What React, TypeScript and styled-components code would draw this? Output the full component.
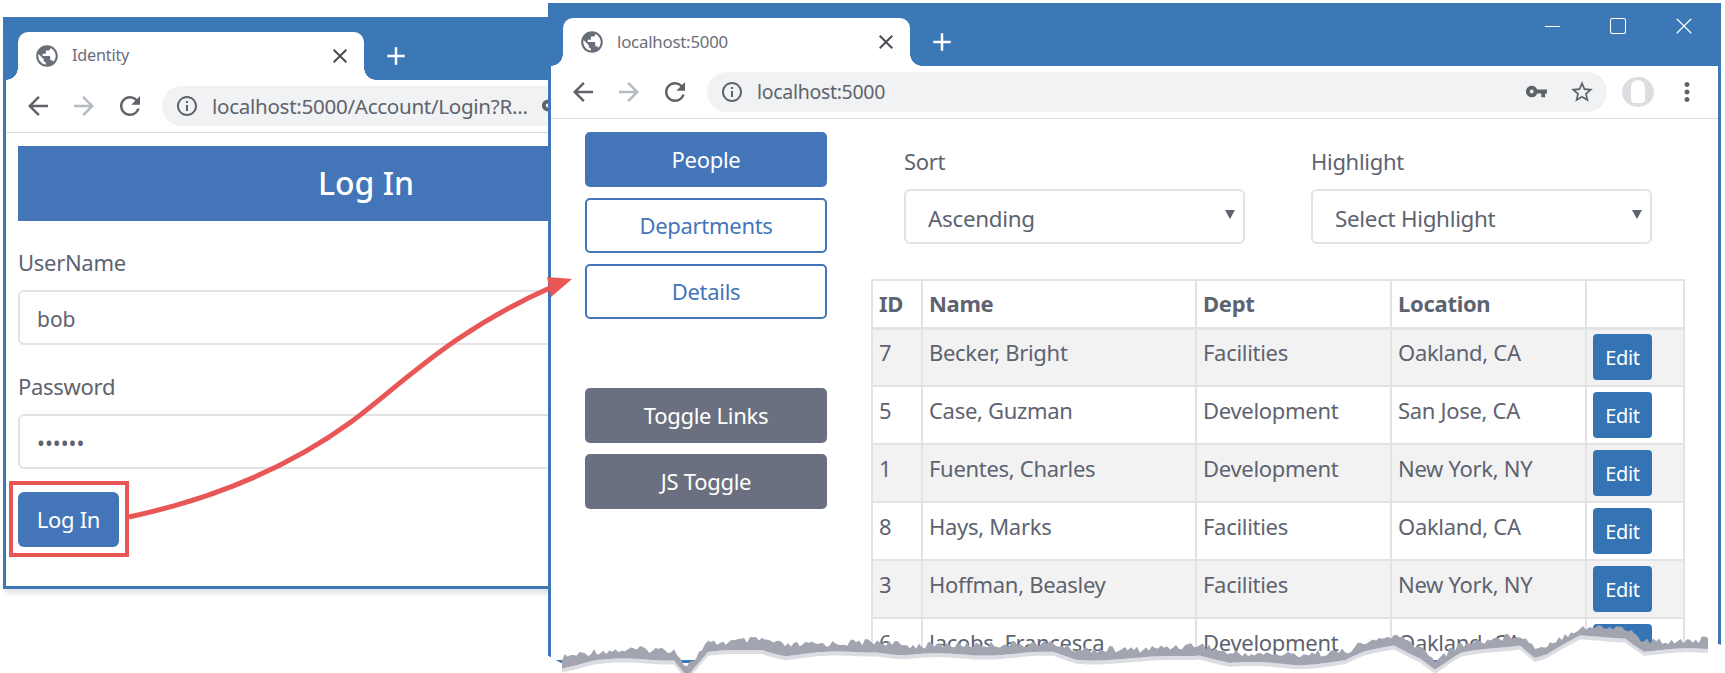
import styled, { createGlobalStyle } from 'styled-components';
import { Minus, Square, X } from 'lucide-react';
import {
  MdAdd,
  MdArrowBack,
  MdArrowForward,
  MdClose,
  MdInfoOutline,
  MdMoreVert,
  MdPublic,
  MdRefresh,
  MdStarBorder,
  MdVpnKey,
} from 'react-icons/md';

const FONT = '"Noto Sans", "Open Sans", sans-serif';
const CHROME = '#3c78b6';
const BLUE = '#4375b8';
const INK = '#5e6370';
const LINE = '#e2e3e6';

const Global = createGlobalStyle`
  html, body {
    margin: 0;
    background: #fff;
    overflow: hidden;
  }
  * { box-sizing: border-box; }
`;

const Desktop = styled.div`
  position: relative;
  width: 1725px;
  height: 673px;
  overflow: hidden;
  font-family: ${FONT};
  color: ${INK};
`;

const Window = styled.div<{ $left: number; $top: number; $width: number; $height: number; $shadow?: boolean }>`
  position: absolute;
  left: ${p => p.$left}px;
  top: ${p => p.$top}px;
  width: ${p => p.$width}px;
  height: ${p => p.$height}px;
  background: #fff;
  border: 3px solid ${CHROME};
  border-top-width: 1px;
  display: flex;
  flex-direction: column;
  overflow: hidden;
  box-shadow: ${p => (p.$shadow ? '0 7px 4px -2px #e6e6ea' : 'none')};
`;

const TitleBar = styled.div`
  flex: none;
  height: 62px;
  background: ${CHROME};
  padding: 14px 0 0 12px;
  display: flex;
  align-items: flex-start;
`;

const Tab = styled.div<{ $width: number }>`
  position: relative;
  width: ${p => p.$width}px;
  height: 48px;
  background: #fff;
  border-radius: 10px 10px 0 0;
  display: flex;
  align-items: center;
  padding: 0 12px 0 16px;
  color: #6a6e78;

  &::before,
  &::after {
    content: '';
    position: absolute;
    bottom: 0;
    width: 12px;
    height: 12px;
    background: radial-gradient(circle at var(--cx) 0, ${CHROME} 11.5px, #fff 12px);
  }
  &::before { left: -12px; --cx: 0; }
  &::after { right: -12px; --cx: 12px; }
`;

const TabTitle = styled.span<{ $size: number }>`
  flex: 1;
  margin: 0 0 2px 12px;
  font-size: ${p => p.$size}px;
  letter-spacing: -0.2px;
  white-space: nowrap;
`;

const NewTab = styled.div`
  margin: 9px 0 0 17px;
  color: #fff;
  display: flex;
`;

const WindowControls = styled.div`
  margin-left: auto;
  margin-top: -6px;
  padding-right: 19px;
  display: flex;
  gap: 36px;
  color: #fff;
`;

const ControlSlot = styled.div`
  width: 30px;
  height: 28px;
  display: flex;
  align-items: center;
  justify-content: center;
`;

const Toolbar = styled.div<{ $height: number }>`
  flex: none;
  height: ${p => p.$height}px;
  border-bottom: 1px solid #d9dadd;
  display: flex;
  align-items: center;
  padding: 0 19px 1px 20px;
  gap: 22px;
  color: #5f6368;
`;

const IconSlot = styled.div<{ $tint?: string }>`
  flex: none;
  width: 24px;
  height: 24px;
  display: flex;
  align-items: center;
  justify-content: center;
  color: ${p => p.$tint ?? 'inherit'};

  svg { flex: none; }
`;

const AddressBar = styled.div<{ $width?: number }>`
  flex: ${p => (p.$width ? 'none' : '1')};
  width: ${p => (p.$width ? `${p.$width}px` : 'auto')};
  height: 40px;
  margin-left: -2px;
  border-radius: 20px;
  background: #f1f2f3;
  display: flex;
  align-items: center;
  padding: 0 13px 0 13px;
  gap: 13px;
`;

const Url = styled.span<{ $size: number }>`
  flex: 1;
  font-size: ${p => p.$size}px;
  letter-spacing: -0.3px;
  white-space: nowrap;
  color: #5f636e;
`;

const KeySlot = styled(IconSlot)`
  margin-right: 9px;
`;

const Avatar = styled.div`
  flex: none;
  width: 32px;
  height: 30px;
  margin-left: -7px;
  border-radius: 50%;
  background: #dcdde1;
  display: flex;
  justify-content: center;
  padding-top: 3px;

  &::after {
    content: '';
    width: 14px;
    height: 23px;
    border-radius: 7px 7px 4px 4px;
    background: #fff;
  }
`;

const KebabSlot = styled(IconSlot)`
  margin-left: -1px;
`;

const LoginBody = styled.div`
  padding: 13px 0 0 12px;
`;

const Banner = styled.div`
  width: 696px;
  height: 75px;
  padding-bottom: 2px;
  background: ${BLUE};
  color: #fff;
  font-size: 32px;
  font-weight: 500;
  display: flex;
  align-items: center;
  justify-content: center;
`;

const Label = styled.div`
  font-size: 22px;
  line-height: 28px;
  height: 30px;
  margin-bottom: 12px;
  letter-spacing: -0.3px;
`;

const LoginLabel = styled(Label)`
  margin-top: 27px;
`;

const TextInput = styled.input`
  display: block;
  width: 700px;
  height: 55px;
  border: 2px solid ${LINE};
  border-radius: 6px;
  background: #fff;
  padding: 3px 17px 0;
  font: 21px ${FONT};
  color: ${INK};
  outline: none;
`;

const SubmitButton = styled.button`
  display: block;
  margin-top: 23px;
  padding: 0 0 2px;
  width: 101px;
  height: 55px;
  border: 0;
  border-radius: 6px;
  background: ${BLUE};
  color: #fff;
  font: 22px ${FONT};
  letter-spacing: -0.3px;
`;

const Page = styled.div`
  flex: 1;
  display: flex;
  align-items: flex-start;
`;

const Sidebar = styled.div`
  flex: none;
  width: 242px;
  margin: 13px 0 0 34px;
  display: flex;
  flex-direction: column;
  gap: 11px;
`;

const NavButton = styled.button<{ $kind: 'solid' | 'outline' | 'muted' }>`
  height: 55px;
  padding: 0 0 2px;
  border-radius: 5px;
  font: 22px ${FONT};
  letter-spacing: -0.3px;
  border: ${p => (p.$kind === 'outline' ? `2px solid ${BLUE}` : '0')};
  background: ${p => (p.$kind === 'solid' ? BLUE : p.$kind === 'muted' ? '#6b7080' : '#fff')};
  color: ${p => (p.$kind === 'outline' ? BLUE : '#fff')};
`;

const SidebarGap = styled.div`
  height: 47px;
`;

const Main = styled.div`
  flex: none;
  width: 812px;
  margin-left: 44px;
  padding-top: 28px;
`;

const Filters = styled.div`
  display: grid;
  grid-template-columns: 341px 341px;
  column-gap: 66px;
  padding-left: 33px;
  margin-bottom: 35px;
`;

const SelectWrap = styled.div`
  position: relative;
  height: 55px;

  &::after {
    content: '';
    position: absolute;
    right: 10px;
    top: 21px;
    border: 5px solid transparent;
    border-top: 9px solid #5e6370;
    border-bottom: 0;
  }
`;

const Select = styled.select`
  width: 100%;
  height: 100%;
  appearance: none;
  border: 2px solid ${LINE};
  border-radius: 6px;
  background: #fff;
  padding: 3px 22px 0;
  font: 22.4px ${FONT};
  letter-spacing: -0.3px;
  color: ${INK};
  outline: none;
`;

const Table = styled.table`
  width: 812px;
  table-layout: fixed;
  border-collapse: collapse;
  font-size: 22px;
  letter-spacing: -0.3px;
  border: 2px solid ${LINE};
`;

const Th = styled.th`
  height: 48px;
  padding: 0 6px 2px;
  text-align: left;
  font-weight: 700;
  border: 2px solid ${LINE};
  border-bottom-width: 3px;
`;

const Row = styled.tr<{ $striped: boolean }>`
  background: ${p => (p.$striped ? '#f2f2f3' : '#fff')};
`;

const Td = styled.td`
  height: 58px;
  padding: 0 6px 10px;
  border: 2px solid ${LINE};
  white-space: nowrap;
`;

const ActionTd = styled(Td)`
  padding: 0 6px;
`;

const EditButton = styled.button`
  display: block;
  padding: 0;
  width: 59px;
  height: 46px;
  border: 0;
  border-radius: 4px;
  background: #3474b5;
  color: #fff;
  font: 20px ${FONT};
  letter-spacing: -0.3px;
`;

const Overlay = styled.svg`
  position: absolute;
  left: 0;
  top: 0;
  pointer-events: none;
`;

const PEOPLE = [
  { id: 7, name: 'Becker, Bright', dept: 'Facilities', location: 'Oakland, CA' },
  { id: 5, name: 'Case, Guzman', dept: 'Development', location: 'San Jose, CA' },
  { id: 1, name: 'Fuentes, Charles', dept: 'Development', location: 'New York, NY' },
  { id: 8, name: 'Hays, Marks', dept: 'Facilities', location: 'Oakland, CA' },
  { id: 3, name: 'Hoffman, Beasley', dept: 'Facilities', location: 'New York, NY' },
  { id: 6, name: 'Jacobs, Francesca', dept: 'Development', location: 'Oakland, CA' },
];

// Key points of the torn paper edge, taken from the picture.
const TEAR: [number, number][] = [
  [562, 658], [594, 652], [640, 650], [674, 650], [687, 667], [708, 644],
  [762, 640], [785, 646], [877, 642], [904, 646], [1000, 645], [1053, 644], [1076, 650],
  [1140, 650], [1200, 645], [1230, 654], [1297, 655], [1345, 652], [1364, 644], [1394, 636],
  [1420, 648], [1435, 660], [1461, 645], [1520, 635], [1535, 648], [1547, 645], [1580, 628],
  [1625, 628], [1644, 642], [1711, 640],
];

function tearLines() {
  const top: [number, number][] = [];
  const bottom: [number, number][] = [];
  let step = 1;
  for (let i = 0; i < TEAR.length - 1; i++) {
    const [x0, y0] = TEAR[i];
    const [x1, y1] = TEAR[i + 1];
    const n = Math.max(1, Math.round((x1 - x0) / 3));
    for (let j = 0; j < n; j++) {
      const t = j / n;
      const x = x0 + (x1 - x0) * t;
      const y = y0 + (y1 - y0) * t;
      const noise = Math.sin(step * 12.9898) * 43758.5453;
      top.push([x, y + (noise - Math.floor(noise)) * 7 - 4]);
      bottom.push([x, y + 9 + Math.sin(x / 17) * 1.5]);
      step++;
    }
  }
  return { top, bottom };
}

const line = (pts: [number, number][], dy = 0) =>
  pts.map(([x, y]) => `${x.toFixed(1)},${(y + dy).toFixed(1)}`).join(' ');

const { top: tearTop, bottom: tearBottom } = tearLines();
const tearBottomBack = [...tearBottom].reverse();

function Annotations() {
  return (
    <Overlay width={1725} height={673}>
      <rect x={11} y={483} width={116} height={72} fill="none" stroke="#e85656" strokeWidth={4} />
      <path
        d="M129 517 C 222 497 296 462 351 422 C 400 386 450 332 552 287"
        fill="none"
        stroke="#e85656"
        strokeWidth={5}
      />
      <polygon points="572,279 547,277 551,297" fill="#e85656" />
      <polygon points={`545,673 545,654 ${line(tearTop, 3)} 1725,646 1725,673`} fill="#fff" />
      <polygon points={`${line(tearBottom)} ${line(tearBottomBack, 4)}`} fill="#dcdde2" />
      <polygon points={`${line(tearTop)} ${line(tearBottomBack)}`} fill="#a2a5b0" />
    </Overlay>
  );
}

function BrowserNav() {
  return (
    <>
      <IconSlot><MdArrowBack size={30} /></IconSlot>
      <IconSlot $tint="#b6bac4"><MdArrowForward size={30} /></IconSlot>
      <IconSlot><MdRefresh size={30} /></IconSlot>
    </>
  );
}

export default function App() {
  return (
    <Desktop>
      <Global />
      <Window $left={3} $top={17} $width={600} $height={572} $shadow>
        <TitleBar>
          <Tab $width={346}>
            <MdPublic size={26} />
            <TabTitle $size={16.2}>Identity</TabTitle>
            <MdClose size={24} color="#4a4d55" />
          </Tab>
          <NewTab><MdAdd size={30} /></NewTab>
        </TitleBar>
        <Toolbar $height={53}>
          <BrowserNav />
          <AddressBar $width={402}>
            <IconSlot><MdInfoOutline size={24} /></IconSlot>
            <Url $size={20.6}>localhost:5000/Account/Login?R...</Url>
            <IconSlot><MdVpnKey size={23} /></IconSlot>
          </AddressBar>
        </Toolbar>
        <LoginBody>
          <Banner>Log In</Banner>
          <LoginLabel>UserName</LoginLabel>
          <TextInput readOnly value="bob" />
          <LoginLabel>Password</LoginLabel>
          <TextInput readOnly type="password" value="secret" />
          <SubmitButton>Log In</SubmitButton>
        </LoginBody>
      </Window>

      <Window $left={548} $top={3} $width={1173} $height={660}>
        <TitleBar>
          <Tab $width={347}>
            <MdPublic size={26} />
            <TabTitle $size={16.8}>localhost:5000</TabTitle>
            <MdClose size={24} color="#4a4d55" />
          </Tab>
          <NewTab><MdAdd size={30} /></NewTab>
          <WindowControls>
            <ControlSlot><Minus size={25} strokeWidth={1} /></ControlSlot>
            <ControlSlot><Square size={20} strokeWidth={1.3} /></ControlSlot>
            <ControlSlot><X size={28} strokeWidth={1} /></ControlSlot>
          </WindowControls>
        </TitleBar>
        <Toolbar $height={53}>
          <BrowserNav />
          <AddressBar>
            <IconSlot><MdInfoOutline size={24} /></IconSlot>
            <Url $size={19.5}>localhost:5000</Url>
            <KeySlot><MdVpnKey size={23} /></KeySlot>
            <IconSlot><MdStarBorder size={26} /></IconSlot>
          </AddressBar>
          <Avatar />
          <KebabSlot><MdMoreVert size={30} /></KebabSlot>
        </Toolbar>
        <Page>
          <Sidebar>
            <NavButton $kind="solid">People</NavButton>
            <NavButton $kind="outline">Departments</NavButton>
            <NavButton $kind="outline">Details</NavButton>
            <SidebarGap />
            <NavButton $kind="muted">Toggle Links</NavButton>
            <NavButton $kind="muted">JS Toggle</NavButton>
          </Sidebar>
          <Main>
            <Filters>
              <div>
                <Label>Sort</Label>
                <SelectWrap>
                  <Select defaultValue="asc">
                    <option value="asc">Ascending</option>
                    <option value="desc">Descending</option>
                  </Select>
                </SelectWrap>
              </div>
              <div>
                <Label>Highlight</Label>
                <SelectWrap>
                  <Select defaultValue="">
                    <option value="">Select Highlight</option>
                  </Select>
                </SelectWrap>
              </div>
            </Filters>
            <Table>
              <colgroup>
                <col width={50} />
                <col width={274} />
                <col width={195} />
                <col width={195} />
                <col width={98} />
              </colgroup>
              <thead>
                <tr>
                  <Th>ID</Th>
                  <Th>Name</Th>
                  <Th>Dept</Th>
                  <Th>Location</Th>
                  <Th />
                </tr>
              </thead>
              <tbody>
                {PEOPLE.map((p, i) => (
                  <Row key={p.id} $striped={i % 2 === 0}>
                    <Td>{p.id}</Td>
                    <Td>{p.name}</Td>
                    <Td>{p.dept}</Td>
                    <Td>{p.location}</Td>
                    <ActionTd><EditButton>Edit</EditButton></ActionTd>
                  </Row>
                ))}
              </tbody>
            </Table>
          </Main>
        </Page>
      </Window>
      <Annotations />
    </Desktop>
  );
}
